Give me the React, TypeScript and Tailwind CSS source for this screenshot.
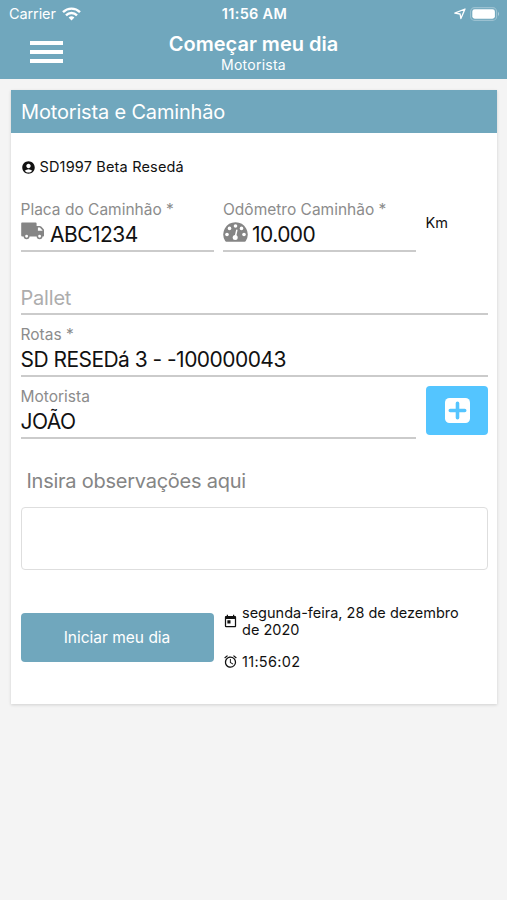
import React from 'react';
import { MdAccountCircle, MdToday, MdAlarm } from 'react-icons/md';

const WifiIcon: React.FC = () => (
  <svg width="19" height="14" viewBox="0 0 19 14" fill="none" stroke="white" strokeWidth="2.4">
    <path d="M1 5.1A12.2 12.2 0 0 1 18 5.1" />
    <path d="M4 8.3A7.8 7.8 0 0 1 15 8.3" />
    <path d="M9.5 13.6L6.6 10.6A4.2 4.2 0 0 1 12.4 10.6Z" fill="white" stroke="none" />
  </svg>
);

const LocationIcon: React.FC = () => (
  <svg width="12" height="12" viewBox="0 0 12 12" fill="none" stroke="white" strokeWidth="1.3" strokeLinejoin="round">
    <path d="M11 1L6.9 10.6L6.1 6L0.8 5.2Z" />
  </svg>
);

const BatteryIcon: React.FC = () => (
  <svg width="30" height="14" viewBox="0 0 30 14">
    <rect x="0.6" y="0.6" width="26" height="12.8" rx="4" fill="none" stroke="white" strokeOpacity="0.3" strokeWidth="1.1" />
    <rect x="2.3" y="2.3" width="22.6" height="9.4" rx="2.4" fill="white" />
    <path d="M28 4.8Q30 7 28 9.2Z" fill="white" fillOpacity="0.45" />
  </svg>
);

const TruckIcon: React.FC = () => (
  <svg width="24" height="18" viewBox="0 0 24 18" className="mr-[5.5px] shrink-0">
    <path
      fill="#858585"
      fillRule="evenodd"
      d="M1 0.5H14.6Q15.6 0.5 15.6 1.5V4H18.8Q19.6 4 20.2 4.6L22.5 7Q23 7.5 23 8.3V13.2Q23.4 14.4 22 14.4H2Q0 14.6 0.2 13.2V1.5Q0.2 0.5 1 0.5ZM16.9 5.5V8.8H21.4V8.3L18.8 5.5Z"
    />
    <g fill="white" stroke="#858585" strokeWidth="1.5">
      <circle cx="5.6" cy="14.2" r="2.2" />
      <circle cx="18.6" cy="14.2" r="2.2" />
    </g>
  </svg>
);

const GaugeIcon: React.FC = () => (
  <svg width="25" height="20" viewBox="0 0 25 20" className="mr-1 shrink-0">
    <path d="M12.5 0.3A12.2 12.2 0 0 0 2.2 19Q2.6 19.7 3.3 19.7H21.7Q22.4 19.7 22.8 19A12.2 12.2 0 0 0 12.5 0.3Z" fill="#858585" />
    <g fill="white">
      <circle cx="4" cy="12.5" r="1.8" />
      <circle cx="6.5" cy="6.4" r="1.8" />
      <circle cx="12.5" cy="4" r="1.8" />
      <circle cx="18.5" cy="6.4" r="1.8" />
      <circle cx="21" cy="12.5" r="1.8" />
      <circle cx="12.2" cy="15.6" r="2.5" />
    </g>
    <path d="M12.3 15L13.8 8.2" stroke="white" strokeWidth="1.5" strokeLinecap="round" />
  </svg>
);

const PlusSquareIcon: React.FC = () => (
  <svg width="25" height="25" viewBox="0 0 25 25">
    <rect width="25" height="25" rx="4.5" fill="white" />
    <path d="M12.5 5.3V19.7M5.3 12.5H19.7" stroke="#54c5ff" strokeWidth="3.6" strokeLinecap="round" />
  </svg>
);

const Field: React.FC<{
  label: string;
  value: string;
  icon?: React.ReactNode;
  className?: string;
}> = ({ label, value, icon, className = '' }) => (
  <div className={`h-[62px] border-b-2 border-[#cbcbcb] pt-[9.5px] ${className}`}>
    <div className="text-[15.5px] leading-5 text-[#8c8c8c]">{label}</div>
    <div className="flex h-7 items-start text-[21px] leading-7 tracking-[-0.54px] text-[#111]">
      {icon && <span className="mt-0.5">{icon}</span>}
      <span className="mt-[1.5px] whitespace-nowrap">{value}</span>
    </div>
  </div>
);

const StatusBar: React.FC = () => (
  <div className="grid h-7 grid-cols-3 items-center pl-[9px] pr-[7px] text-[14.5px]">
    <div className="flex items-center gap-1.5">
      <span className="tracking-[-0.1px]">Carrier</span>
      <WifiIcon />
    </div>
    <div className="text-center font-semibold tracking-[0.3px]">11:56 AM</div>
    <div className="flex items-center justify-end gap-1">
      <LocationIcon />
      <BatteryIcon />
    </div>
  </div>
);

const App: React.FC = () => {
  return (
    <div className="min-h-screen w-full bg-[#f4f4f4] font-['Inter',sans-serif] text-[#111]">
      {/* Header */}
      <header className="h-[79px] bg-[#70a7bd] text-white">
        <StatusBar />
        <div className="grid grid-cols-[100px_1fr_100px]">
          <button aria-label="Menu" className="ml-[30px] mt-[13px] flex w-[33px] flex-col gap-[5px]">
            <span className="h-1 w-full bg-white" />
            <span className="h-1 w-full bg-white" />
            <span className="h-1 w-full bg-white" />
          </button>
          <div className="pt-1 text-center">
            <h1 className="text-xl font-semibold leading-6">Começar meu dia</h1>
            <p className="text-[14px] leading-[18px] tracking-[0.25px]">Motorista</p>
          </div>
        </div>
      </header>

      {/* Card */}
      <main className="ml-[11px] mr-[10px] mt-[10.5px] h-[614.5px] bg-white shadow-[0_1px_3px_rgba(0,0,0,0.15)]">
        <h2 className="flex h-[43.5px] items-center bg-[#70a7bd] px-2.5 pt-px text-xl tracking-[-0.17px] text-white">
          Motorista e Caminhão
        </h2>

        <div className="pl-[9.5px] pr-[9px]">
          <div className="flex h-[57px] items-center gap-1 pt-[11px] text-[14.5px] tracking-[0.17px]">
            <MdAccountCircle size={15} />
            <span>SD1997 Beta Resedá</span>
          </div>

          {/* Truck data */}
          <div className="flex gap-[9.5px]">
            <Field className="w-[193px]" label="Placa do Caminhão *" value="ABC1234" icon={<TruckIcon />} />
            <Field className="w-[193px]" label="Odômetro Caminhão *" value="10.000" icon={<GaugeIcon />} />
            <span className="pt-[23px] text-[14.5px] leading-5">Km</span>
          </div>

          <div className="flex h-[63px] items-end border-b-2 border-[#cbcbcb] pb-px text-xl tracking-[-0.2px] text-[#adadad]">
            Pallet
          </div>
          <Field label="Rotas *" value="SD RESEDá 3 - -100000043" />

          {/* Driver */}
          <div className="flex gap-[10px]">
            <Field className="w-[396px]" label="Motorista" value="JOÃO" />
            <button aria-label="Adicionar motorista" className="mt-[9px] flex h-[49px] w-[62px] items-center justify-center rounded bg-[#54c5ff]">
              <PlusSquareIcon />
            </button>
          </div>

          {/* Notes */}
          <label className="block">
            <span className="block pl-1.5 pt-7 text-xl leading-7 tracking-[-0.25px] text-[#858585]">Insira observações aqui</span>
            <textarea className="mt-3 block h-[63px] w-full resize-none rounded border border-[#dedede]" />
          </label>

          <div className="mt-[34px] flex gap-[9.5px]">
            <button className="mt-[9px] h-[49px] w-[193px] rounded bg-[#70a7bd] text-[15.5px] text-white">
              Iniciar meu dia
            </button>
            <div className="flex-1 text-[14.5px] leading-[17px]">
              <div className="flex items-center gap-1">
                <MdToday size={15} className="shrink-0" />
                <span className="max-w-[225px]">segunda-feira, 28 de dezembro de 2020</span>
              </div>
              <div className="mt-[15px] flex items-center gap-1">
                <MdAlarm size={15} className="shrink-0" />
                <span className="tracking-[0.3px]">11:56:02</span>
              </div>
            </div>
          </div>
        </div>
      </main>
    </div>
  );
};

export default App;
